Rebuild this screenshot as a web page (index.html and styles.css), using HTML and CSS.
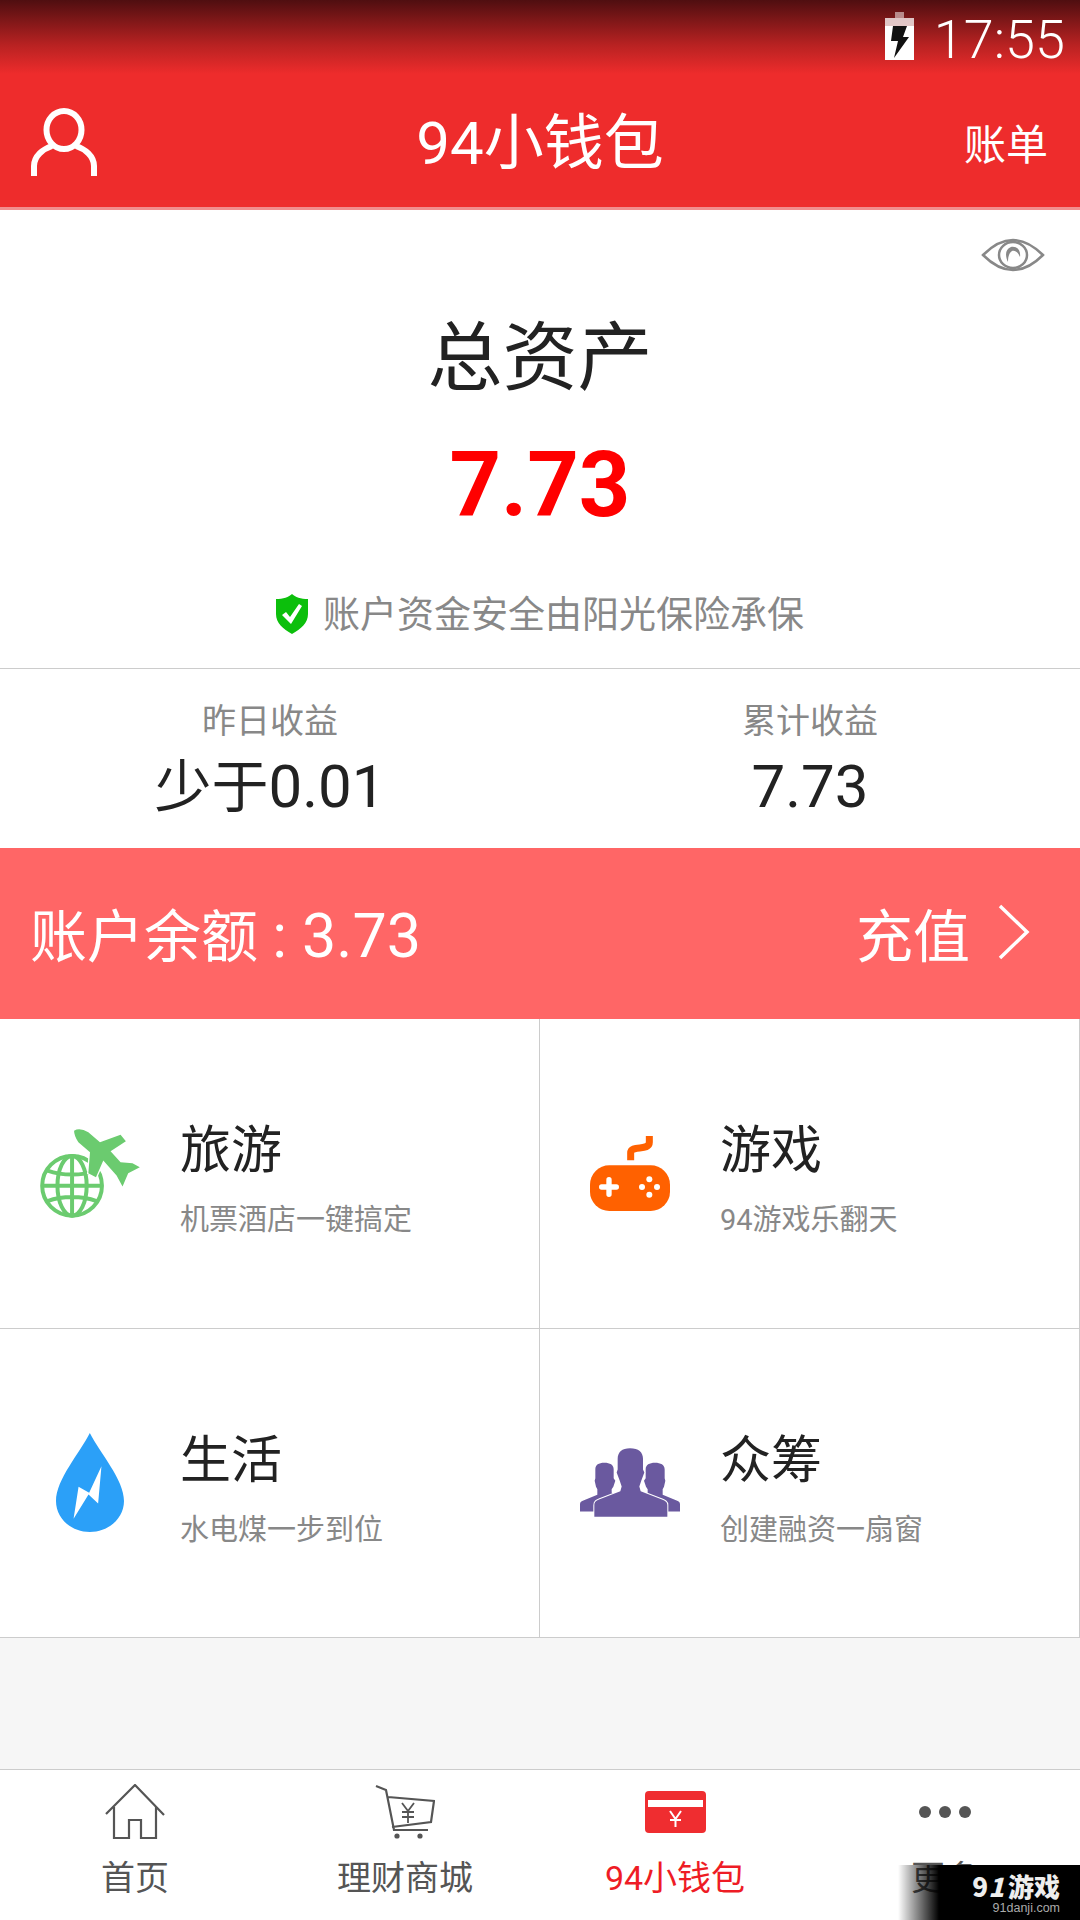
FILE: index.html
```html
<!DOCTYPE html>
<html lang="zh-CN">
<head>
  <meta charset="UTF-8">
  <title>94小钱包</title>
  <link rel="stylesheet" href="styles.css">
</head>
<body>
  <div class="app">
    <!-- Header -->
    <div class="header">
      <div class="status-bar">
        <svg class="battery" viewBox="0 0 29 48">
          <path d="M10 0h9v6h10v12H0V6h10z" fill="#fff" opacity="0.5"/>
          <rect y="6" width="29" height="42" fill="#fff" opacity="0.5"/>
          <rect y="14" width="29" height="34" fill="#fff"/>
          <path d="M8 14h14l-4 11h6L9 46l4-17H6z" fill="#111"/>
        </svg>
        <span class="time">17:55</span>
      </div>
      <div class="title-bar">
        <svg class="user-icon" viewBox="0 0 66 68">
          <ellipse cx="33" cy="22" rx="17.5" ry="19" fill="none" stroke="#fff" stroke-width="6"/>
          <path d="M3 68V58C3 48 12 41 21 38M63 68V58C63 48 54 41 45 38" fill="none" stroke="#fff" stroke-width="6"/>
        </svg>
        <span class="title">94小钱包</span>
        <span class="bill">账单</span>
      </div>
    </div>

    <!-- Total assets -->
    <div class="assets">
      <svg class="eye" viewBox="0 0 64 34">
        <path d="M2 17C14 5 23 2 32 2s18 3 30 15C50 29 41 32 32 32S14 29 2 17z" fill="none" stroke="#888" stroke-width="2.5"/>
        <ellipse cx="32" cy="17" rx="14" ry="13" fill="none" stroke="#888" stroke-width="2.5"/>
        <path d="M27 24c-3-6-3-13 3-15 6-1 10 3 9 10-2-5-5-7-8-6-3 2-4 6-4 11z" fill="#888"/>
      </svg>
      <div class="assets-label">总资产</div>
      <div class="assets-value">7.73</div>
      <div class="safe-line">
        <svg class="shield" viewBox="0 0 32 40">
          <path d="M16 0c3 3 9 5 16 5v15c0 9-7 15-16 20C7 35 0 29 0 20V5c7 0 13-2 16-5z" fill="#0cbf0c"/>
          <path d="M6 21l4-3 4 5 9-13 3 2-11 18z" fill="#fff"/>
        </svg>
        <span>账户资金安全由阳光保险承保</span>
      </div>
    </div>

    <!-- Earnings -->
    <div class="stats">
      <div class="stat">
        <div class="stat-label">昨日收益</div>
        <div class="stat-value"><span class="stat-cjk">少于</span>0.01</div>
      </div>
      <div class="stat">
        <div class="stat-label">累计收益</div>
        <div class="stat-value">7.73</div>
      </div>
    </div>

    <!-- Balance -->
    <div class="balance">
      <span>账户余额 <span class="balance-num">: 3.73</span></span>
      <div class="recharge">
        <span>充值</span>
        <svg class="chevron" viewBox="0 0 32 56">
          <path d="M2 2l27 26L2 54" fill="none" stroke="#fff" stroke-width="3.5"/>
        </svg>
      </div>
    </div>

    <!-- Services -->
    <div class="services">
      <div class="service">
        <div class="service-icon">
          <svg class="globe" viewBox="120 145 300 268">
            <g fill="none" stroke="#6bcb6f" stroke-width="12">
              <circle cx="216" cy="316" r="90"/>
              <ellipse cx="216" cy="316" rx="44" ry="90"/>
              <path d="M216 225v182M125 316h182M142 270c45 16 103 16 148 0M142 362c45-16 103-16 148 0"/>
            </g>
            <path d="M222 150q18-10 43 5l35 30 62-23 16 20-46 30 30 33 36 3 22 12-35 18-17 40-18-33-40-45-22 50-23-12 5-63-35-30q-13-20-13-35z" fill="#6bcb6f" stroke="#fff" stroke-width="8" paint-order="stroke"/>
          </svg>
        </div>
        <div class="service-text">
          <div class="service-name">旅游</div>
          <div class="service-desc">机票酒店一键搞定</div>
        </div>
      </div>
      <div class="service">
        <div class="service-icon">
          <svg class="pad" viewBox="90 105 240 225">
            <rect x="90" y="193" width="240" height="137" rx="58" fill="#ff6100"/>
            <path d="M212 178v-22c0-26 56-4 56-32v-19" fill="none" stroke="#ff6100" stroke-width="21"/>
            <path d="M147 236v44M125 258h44" stroke="#fff" stroke-width="16" stroke-linecap="round"/>
            <g fill="#fff">
              <circle cx="268" cy="235" r="9"/>
              <circle cx="268" cy="281" r="9"/>
              <circle cx="246" cy="258" r="9"/>
              <circle cx="291" cy="258" r="9"/>
            </g>
          </svg>
        </div>
        <div class="service-text">
          <div class="service-name">游戏</div>
          <div class="service-desc">94游戏乐翻天</div>
        </div>
      </div>
      <div class="service">
        <div class="service-icon">
          <svg class="drop" viewBox="165 1060 205 298">
            <path d="M267 1060c30 60 103 140 103 205 0 52-46 93-103 93s-102-41-102-93c0-65 72-145 102-205z" fill="#2ba0f8"/>
            <path d="M302 1160l-10 112-29-27-45 73 15-96 32 18z" fill="#fff"/>
          </svg>
        </div>
        <div class="service-text">
          <div class="service-name">生活</div>
          <div class="service-desc">水电煤一步到位</div>
        </div>
      </div>
      <div class="service">
        <div class="service-icon">
          <svg class="crowd" viewBox="60 1042 300 206">
            <g fill="#6a599f">
              <path d="M133 1086c17 0 28 6 28 20v26l5 8-6 18-5 7v11l45 19v37H60v-22c0-7 4-9 12-12l40-16v-17l-4-7-4-18 2-8v-26c0-14 10-20 27-20z"/>
              <path d="M285 1086c-17 0-28 6-28 20v26l-5 8 6 18 5 7v11l-45 19v37h142v-22c0-7-4-9-12-12l-40-16v-17l4-7 4-18-2-8v-26c0-14-12-20-29-20z"/>
              <path d="M210 1042c26 0 39 12 39 32v32l4 9-9 24-6 18 4 14 62 24c10 4 18 7 18 18v35H103v-35c0-11 6-14 16-18l62-24 4-14-6-18-9-24 3-9v-32c0-20 13-32 37-32z" stroke="#fff" stroke-width="6" paint-order="stroke"/>
            </g>
          </svg>
        </div>
        <div class="service-text">
          <div class="service-name">众筹</div>
          <div class="service-desc">创建融资一扇窗</div>
        </div>
      </div>
    </div>

    <div class="spacer"></div>

    <!-- Tabs -->
    <div class="tabs">
      <div class="tab">
        <div class="tab-icon">
          <svg class="home" viewBox="0 0 60 56">
            <path d="M1 30L30 1l29 30M9 23v31h15V36h12v18h15V23" fill="none" stroke="#555" stroke-width="2.2"/>
          </svg>
        </div>
        <span>首页</span>
      </div>
      <div class="tab">
        <div class="tab-icon">
          <svg class="cart" viewBox="0 0 60 56">
            <path d="M1 2l10 4 8 40h34M13 13l46 4-3 21-39 5" fill="none" stroke="#555" stroke-width="2.2"/>
            <path d="M27 19l6 8 6-8M33 27v12M27 28h12M27 33h12" fill="none" stroke="#555" stroke-width="1.8"/>
            <circle cx="22" cy="52" r="2.6" fill="#555"/>
            <circle cx="45" cy="52" r="2.6" fill="#555"/>
          </svg>
        </div>
        <span>理财商城</span>
      </div>
      <div class="tab tab-active">
        <div class="tab-icon">
          <svg class="wallet" viewBox="0 0 61 42">
            <rect width="61" height="42" rx="4" fill="#ef2d30"/>
            <rect x="3" y="9" width="55" height="7" fill="#fff"/>
            <path d="M25 20l5.500 8 5.500-8M30.500 28v8M25 29h11" fill="none" stroke="#fff" stroke-width="2"/>
          </svg>
        </div>
        <span>94小钱包</span>
      </div>
      <div class="tab">
        <div class="tab-icon">
          <div class="dots">
            <i></i><i></i><i></i>
          </div>
        </div>
        <span>更多</span>
      </div>
    </div>

    <!-- Watermark -->
    <div class="watermark">
      <div class="wm-logo">9<em>1</em>游戏</div>
      <div class="wm-url">91danji.com</div>
    </div>
  </div>
</body>
</html>
```

FILE: styles.css
```css
/* General */
* {
  box-sizing: border-box;
}

body {
  margin: 0;
  font-family: Roboto, "Noto Sans CJK SC", sans-serif;
  color: #222;
  background-color: #fff;
}

.app {
  position: relative;
  display: flex;
  flex-direction: column;
  width: 1080px;
  height: 1920px;
  overflow: hidden;
}

/* Header */
.header {
  height: 210px;
  background: linear-gradient(#4f0e10 0, #b82222 45px, #ee2c2c 74px);
  border-bottom: 3px solid #f28d8d;
  color: #fff;
}

.status-bar {
  display: flex;
  justify-content: flex-end;
  align-items: flex-start;
  height: 84px;
  padding: 12px 15px 0 0;
}

.battery {
  width: 29px;
  height: 48px;
  margin-right: 20px;
}

.time {
  font-size: 54px;
  font-weight: 300;
  line-height: 56px;
}

.title-bar {
  position: relative;
  display: flex;
  justify-content: center;
  align-items: center;
  height: 116px;
}

.user-icon {
  position: absolute;
  left: 31px;
  top: 24px;
  width: 66px;
  height: 68px;
}

.title {
  padding-bottom: 10px;
  font-size: 60px;
}

.bill {
  position: absolute;
  right: 32px;
  margin-bottom: 2px;
  font-size: 42px;
}

/* Total assets */
.assets {
  position: relative;
  display: flex;
  flex-direction: column;
  align-items: center;
  height: 459px;
  border-bottom: 1px solid #ccc;
}

.eye {
  position: absolute;
  right: 35px;
  top: 28px;
  width: 64px;
  height: 34px;
}

.assets-label {
  margin-top: 98px;
  font-size: 75px;
  line-height: 100px;
}

.assets-value {
  margin-top: 28px;
  font-size: 90px;
  font-weight: 700;
  line-height: 100px;
  color: #f00;
}

.safe-line {
  display: flex;
  align-items: center;
  gap: 15px;
  margin-top: 55px;
  font-size: 37px;
  line-height: 50px;
  color: #888;
}

.shield {
  width: 32px;
  height: 40px;
  margin-top: -4px;
}

/* Earnings */
.stats {
  display: grid;
  grid-template-columns: 1fr 1fr;
  height: 179px;
  text-align: center;
}

.stat-label {
  margin-top: 29px;
  font-size: 34px;
  line-height: 46px;
  color: #888;
}

.stat-value {
  font-size: 60px;
  line-height: 85px;
}

.stat-cjk {
  font-size: 57px;
}

/* Balance */
.balance {
  display: flex;
  justify-content: space-between;
  align-items: center;
  height: 171px;
  padding: 0 50px 4px 30px;
  background-color: #ff6666;
  font-size: 57px;
  color: #fff;
}

.balance-num {
  font-size: 61px;
}

.recharge {
  display: flex;
  align-items: center;
  gap: 28px;
}

.chevron {
  width: 32px;
  height: 56px;
}

/* Services */
.services {
  display: grid;
  grid-template-columns: 1fr 1fr;
  grid-auto-rows: 309.500px;
  background-color: #fff;
}

.service {
  display: flex;
  align-items: center;
  border-right: 1px solid #ccc;
  border-bottom: 1px solid #ccc;
}

.service-icon {
  display: flex;
  justify-content: center;
  flex: none;
  width: 180px;
}

.globe {
  width: 100px;
  height: 89px;
}

.pad {
  width: 80px;
  height: 75px;
}

.drop {
  width: 68px;
  height: 99px;
}

.crowd {
  width: 100px;
  height: 69px;
}

.service-text {
  padding-top: 10px;
}

.service-name {
  font-size: 51px;
  line-height: 70px;
}

.service-desc {
  margin-top: 14px;
  font-size: 29px;
  line-height: 40px;
  color: #888;
}

.spacer {
  flex: 1;
  background-color: #f6f6f6;
}

/* Tabs */
.tabs {
  display: grid;
  grid-template-columns: repeat(4, 1fr);
  height: 151px;
  border-top: 1px solid #ccc;
  background-color: #fff;
}

.tab {
  display: flex;
  flex-direction: column;
  align-items: center;
  font-size: 34px;
  line-height: 48px;
  color: #555;
}

.tab-active {
  color: #ee1c25;
}

.tab-icon {
  display: flex;
  justify-content: center;
  align-items: center;
  height: 84px;
}

.home,
.cart {
  width: 60px;
  height: 56px;
}

.wallet {
  width: 61px;
  height: 42px;
}

.dots {
  display: flex;
  gap: 8px;
}

.dots i {
  width: 12px;
  height: 12px;
  border-radius: 50%;
  background-color: #555;
}

/* Watermark lies over the last tab */
.watermark {
  position: absolute;
  right: 0;
  bottom: 0;
  width: 182px;
  height: 55px;
  padding: 6px 20px 0 0;
  background: linear-gradient(90deg, rgba(0, 0, 0, 0), #000 41px);
  text-align: right;
  color: #eee;
}

.wm-logo {
  font-size: 26px;
  font-weight: 900;
  line-height: 30px;
  font-family: "Noto Sans CJK SC", sans-serif;
}

.wm-logo em {
  font-style: italic;
  margin-right: 4px;
}

.wm-url {
  font-family: "Liberation Sans", sans-serif;
  font-size: 12.500px;
  line-height: 14px;
  color: #aaa;
}
```
